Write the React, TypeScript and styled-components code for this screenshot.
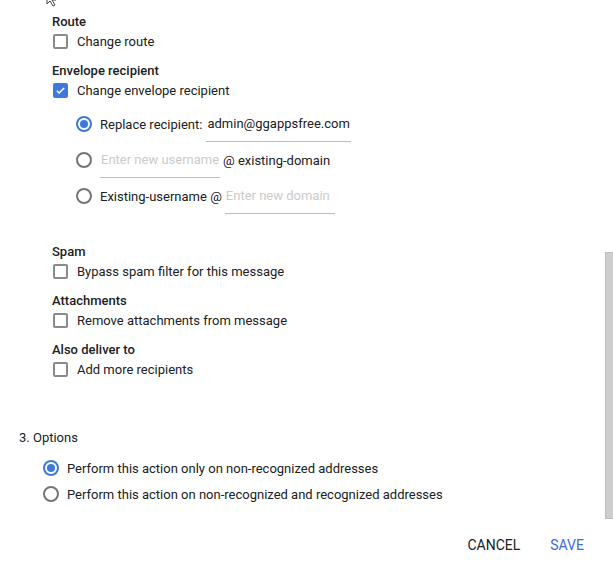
import styled, { createGlobalStyle } from 'styled-components';

const GlobalStyle = createGlobalStyle`
  html, body {
    margin: 0;
    padding: 0;
    background: #ffffff;
  }
  body {
    font-family: Roboto, "Liberation Sans", Arial, sans-serif;
    color: #202124;
  }
`;

const Page = styled.div`
  position: relative;
  width: 613px;
  height: 575px;
  overflow: hidden;
  background: #ffffff;
  font-size: 13px;
`;

const Rules = styled.div`
  display: flex;
  flex-direction: column;
  padding: 11px 0 0 52px;
`;

const Section = styled.div<{ $gap?: number }>`
  display: flex;
  flex-direction: column;
  margin-top: ${(p) => p.$gap ?? 9}px;

  &:first-child {
    margin-top: 0;
  }
`;

const SectionLabel = styled.div`
  font-weight: 500;
  line-height: 18px;
  padding-top: 2px;
  color: #202124;
`;

const CheckRow = styled.label`
  display: flex;
  align-items: center;
  height: 20px;
  cursor: pointer;
`;

const CheckBox = styled.span<{ $checked?: boolean }>`
  box-sizing: border-box;
  width: 15px;
  height: 15px;
  margin: 0 9px 0 1px;
  border-radius: 2px;
  border: 2px solid ${(p) => (p.$checked ? '#3f78dd' : '#8a8a8a')};
  background: ${(p) => (p.$checked ? '#3f78dd' : '#ffffff')};
  display: flex;
  align-items: center;
  justify-content: center;
`;

const RadioGroup = styled.div`
  display: flex;
  flex-direction: column;
  margin: 6px 0 0 24px;
`;

const RadioRow = styled.div<{ $height?: number }>`
  display: flex;
  align-items: center;
  height: ${(p) => p.$height ?? 36}px;
  white-space: nowrap;
`;

const Radio = styled.span<{ $checked?: boolean }>`
  box-sizing: border-box;
  width: 16px;
  height: 16px;
  margin-right: 8px;
  border-radius: 50%;
  border: 2px solid ${(p) => (p.$checked ? '#3f78dd' : '#757575')};
  display: flex;
  align-items: center;
  justify-content: center;
  flex-shrink: 0;

  &::after {
    content: '';
    width: 8px;
    height: 8px;
    border-radius: 50%;
    background: ${(p) => (p.$checked ? '#3f78dd' : 'transparent')};
  }
`;

const TextInput = styled.input<{ $width: number }>`
  box-sizing: border-box;
  width: ${(p) => p.$width}px;
  height: 34px;
  margin: 1px 3px 0 0;
  padding: 0 0 1px 1px;
  border: none;
  border-bottom: 1px solid #bdbdbd;
  outline: none;
  font: inherit;
  font-size: 13px;
  color: #202124;
  background: transparent;

  &::placeholder {
    color: #cbcbcb;
  }
`;

const Options = styled.div`
  display: flex;
  flex-direction: column;
  margin-top: 48px;
  padding-left: 19px;
`;

const OptionsTitle = styled.div`
  line-height: 18px;
  padding-top: 2px;
  color: #202124;
`;

const OptionsList = styled.div`
  display: flex;
  flex-direction: column;
  margin: 8px 0 0 24px;
`;

const Footer = styled.div`
  display: flex;
  justify-content: flex-end;
  margin-top: 20px;
  padding-right: 14px;
`;

const TextButton = styled.button<{ $primary?: boolean }>`
  height: 36px;
  padding: 0 15px;
  border: none;
  background: transparent;
  font-family: Roboto, "Liberation Sans", Arial, sans-serif;
  font-size: 14px;
  font-weight: 400;
  text-transform: uppercase;
  color: ${(p) => (p.$primary ? '#4169e1' : '#202124')};
  cursor: pointer;
`;

const Scrollbar = styled.div`
  position: absolute;
  right: 0;
  top: 252px;
  width: 8px;
  height: 267px;
  box-sizing: border-box;
  background: #cdcdcd;
  border: 1px solid #bfbfbf;
  border-right: none;
`;

const Pointer = styled.svg`
  position: absolute;
  left: 46px;
  top: -9px;
`;

const Check = () => (
  <svg width="11" height="11" viewBox="0 0 24 24">
    <path d="M4 12.5l5 5L20 6.5" fill="none" stroke="#ffffff" strokeWidth="3.4" />
  </svg>
);

const CheckOption = ({ label, checked }: { label: string; checked?: boolean }) => (
  <CheckRow>
    <CheckBox $checked={checked}>{checked && <Check />}</CheckBox>
    {label}
  </CheckRow>
);

export default function App() {
  return (
    <Page>
      <GlobalStyle />
      <Pointer width="14" height="16" viewBox="0 0 14 16">
        <path d="M1 1v12l3-3 3 5 2-1-3-5h4z" fill="#ffffff" stroke="#444" strokeWidth="1" />
      </Pointer>

      <Rules>
        <Section>
          <SectionLabel>Route</SectionLabel>
          <CheckOption label="Change route" />
        </Section>

        <Section>
          <SectionLabel>Envelope recipient</SectionLabel>
          <CheckOption label="Change envelope recipient" checked />
          <RadioGroup>
            <RadioRow>
              <Radio $checked />
              <span style={{ marginRight: 4 }}>Replace recipient:</span>
              <TextInput $width={145} defaultValue="admin@ggappsfree.com" />
            </RadioRow>
            <RadioRow>
              <Radio />
              <TextInput $width={120} placeholder="Enter new username" />
              <span>@ existing-domain</span>
            </RadioRow>
            <RadioRow>
              <Radio />
              <span style={{ marginRight: 3 }}>Existing-username @</span>
              <TextInput $width={110} placeholder="Enter new domain" />
            </RadioRow>
          </RadioGroup>
        </Section>

        <Section $gap={27}>
          <SectionLabel>Spam</SectionLabel>
          <CheckOption label="Bypass spam filter for this message" />
        </Section>

        <Section>
          <SectionLabel>Attachments</SectionLabel>
          <CheckOption label="Remove attachments from message" />
        </Section>

        <Section>
          <SectionLabel>Also deliver to</SectionLabel>
          <CheckOption label="Add more recipients" />
        </Section>
      </Rules>

      <Options>
        <OptionsTitle>3. Options</OptionsTitle>
        <OptionsList>
          <RadioRow $height={26}>
            <Radio $checked />
            Perform this action only on non-recognized addresses
          </RadioRow>
          <RadioRow $height={26}>
            <Radio />
            Perform this action on non-recognized and recognized addresses
          </RadioRow>
        </OptionsList>
      </Options>

      <Footer>
        <TextButton>Cancel</TextButton>
        <TextButton $primary>Save</TextButton>
      </Footer>

      <Scrollbar />
    </Page>
  );
}
